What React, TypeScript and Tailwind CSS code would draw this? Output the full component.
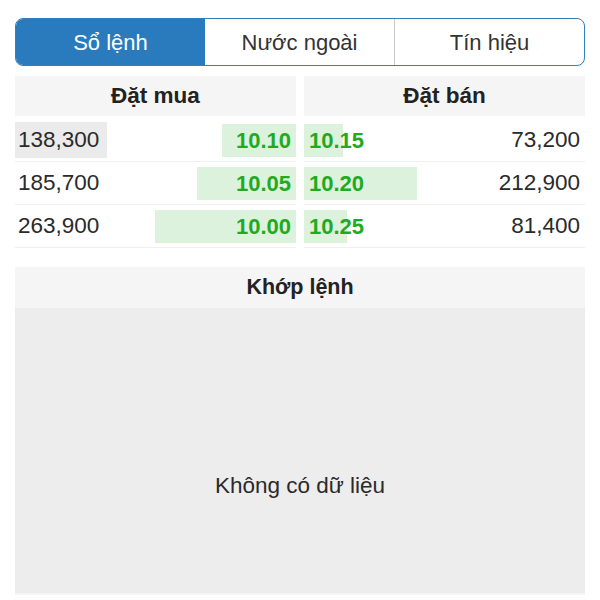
import React from "react";

const buys = [
  { vol: "138,300", price: "10.10", bar: 74, hl: true },
  { vol: "185,700", price: "10.05", bar: 99, hl: false },
  { vol: "263,900", price: "10.00", bar: 141, hl: false },
];
const sells = [
  { vol: "73,200", price: "10.15", bar: 39 },
  { vol: "212,900", price: "10.20", bar: 113 },
  { vol: "81,400", price: "10.25", bar: 43 },
];

export default function App() {
  return (
    <div className="w-[600px] h-[600px] bg-white px-[15px] pt-[18px] font-['Liberation_Sans',Arial,sans-serif] text-[#2a2a2a]">
      <div className="flex h-[48px] rounded-[8px] border border-[#2f80bd] overflow-hidden text-[22px]">
        <div className="w-[189px] bg-[#2a7bbd] text-white flex items-center justify-center">Sổ lệnh</div>
        <div className="flex-1 flex items-center justify-center border-r border-[#c8c8c8] text-[#333]">Nước ngoài</div>
        <div className="flex-1 flex items-center justify-center text-[#333]">Tín hiệu</div>
      </div>

      <div className="mt-[10px] grid grid-cols-2 gap-x-[8px]">
        <div>
          <div className="h-[40px] bg-[#f5f5f5] flex items-center justify-center font-bold text-[22.5px] text-[#222]">Đặt mua</div>
          <div className="mt-[3px]">
            {buys.map((r) => (
              <div key={r.price} className="relative h-[43px] border-b border-[#f0f0f0] flex items-center justify-between">
                <div className={`h-[36px] w-[92px] flex items-center pl-[3px] text-[22.5px] ${r.hl ? "bg-[#ebebeb]" : ""}`}>{r.vol}</div>
                <div className="absolute right-0 top-[5px] h-[33px] bg-[#dcf2dc]" style={{ width: r.bar }} />
                <div className="relative pr-[5px] text-[22px] font-bold text-[#1faa1f]">{r.price}</div>
              </div>
            ))}
          </div>
        </div>
        <div>
          <div className="h-[40px] bg-[#f5f5f5] flex items-center justify-center font-bold text-[22.5px] text-[#222]">Đặt bán</div>
          <div className="mt-[3px]">
            {sells.map((r) => (
              <div key={r.price} className="relative h-[43px] border-b border-[#f0f0f0] flex items-center justify-between">
                <div className="absolute left-0 top-[5px] h-[33px] bg-[#dcf2dc]" style={{ width: r.bar }} />
                <div className="relative pl-[5px] text-[22px] font-bold text-[#1faa1f]">{r.price}</div>
                <div className="pr-[5px] text-[22.5px]">{r.vol}</div>
              </div>
            ))}
          </div>
        </div>
      </div>

      <div className="mt-[19px]">
        <div className="h-[41px] bg-[#f5f5f5] flex items-center justify-center font-bold text-[21.5px] text-[#222]">Khớp lệnh</div>
        <div className="h-[287px] bg-[#ededed] pt-[161px] text-center text-[22.5px] text-[#2a2a2a] border-b-2 border-[#f5f5f5]">
          Không có dữ liệu
        </div>
      </div>
    </div>
  );
}
